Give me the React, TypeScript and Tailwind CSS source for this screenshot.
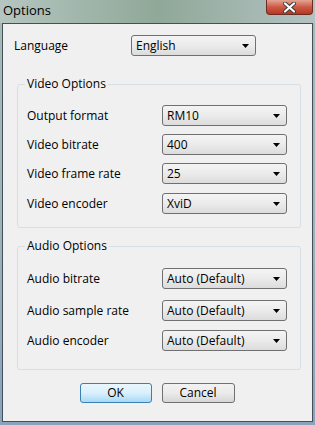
import React from 'react';

const font = { fontFamily: '"Open Sans", "Noto Sans", sans-serif' };

const Select: React.FC<{ value: string; className?: string }> = ({ value, className = '' }) => (
    <div className={`h-[21px] w-[125px] rounded-[3px] border border-[#707070] bg-gradient-to-b from-[#f4f4f4] via-[#ebebeb] to-[#dcdcdc] flex items-center justify-between pl-[4px] pr-[6px] ${className}`}>
        <span className="text-[12px] leading-none text-black">{value}</span>
        <svg width="7" height="4" viewBox="0 0 7 4"><path d="M0 0h7L3.5 4z" fill="#000" /></svg>
    </div>
);

const Row: React.FC<{ label: string; value: string; gap: string }> = ({ label, value, gap }) => (
    <div className={`flex items-center justify-between ${gap}`}>
        <span className="text-[12px] text-black">{label}</span>
        <Select value={value} />
    </div>
);

export default function App() {
    return (
        <div style={font} className="w-[315px] h-[425px] flex flex-col bg-gradient-to-b from-[#a7bab3] via-[#9fb4b6] to-[#8aa3bb]">
            <div className="h-[23px] flex items-start justify-between bg-gradient-to-r from-[#b5c6c0] via-[#8fa898] to-[#b3c2c2]">
                <span className="pl-[3px] pt-[2px] text-[13px] leading-[17px] text-black">Options</span>
                <div className="mr-[2px] w-[47px] h-[15px] rounded-b-[4px] border border-t-0 border-[#6e2c22] bg-gradient-to-b from-[#e4a493] via-[#cc5a45] to-[#b8351f] flex items-center justify-center">
                    <svg width="13" height="11" viewBox="0 0 13 11">
                        <path d="M2 1.5l9 8M11 1.5l-9 8" stroke="#3a3a3a" strokeWidth="4" strokeLinecap="round" />
                        <path d="M2 1.5l9 8M11 1.5l-9 8" stroke="#ffffff" strokeWidth="2.2" strokeLinecap="round" />
                    </svg>
                </div>
            </div>
            <div className="flex-1 mx-[2px] mb-[3px] border border-[#43505c] bg-[#f0f0f0] px-[11px] pt-[11px]">
                <div className="flex items-center">
                    <span className="w-[117px] text-[12px] text-black">Language</span>
                    <Select value="English" className="w-[125px]" />
                </div>

                <fieldset className="mt-[20px] ml-[3px] w-[284px] h-[152px] rounded-[3px] border border-[#d5dfe5] pl-[9px] pr-[13px]">
                    <legend className="-ml-[2px] px-[2px] text-[12px] text-black leading-[16px]">Video Options</legend>
                    <div className="pt-[13px] flex flex-col">
                        <Row label="Output format" value="RM10" gap="" />
                        <Row label="Video bitrate" value="400" gap="mt-[8px]" />
                        <Row label="Video frame rate" value="25" gap="mt-[8px]" />
                        <Row label="Video encoder" value="XviD" gap="mt-[9px]" />
                    </div>
                </fieldset>

                <fieldset className="mt-[10px] ml-[3px] w-[284px] h-[132px] rounded-[3px] border border-[#d5dfe5] pl-[9px] pr-[13px]">
                    <legend className="-ml-[2px] px-[2px] text-[12px] text-black leading-[16px]">Audio Options</legend>
                    <div className="pt-[14px] flex flex-col">
                        <Row label="Audio bitrate" value="Auto (Default)" gap="" />
                        <Row label="Audio sample rate" value="Auto (Default)" gap="mt-[11px]" />
                        <Row label="Audio encoder" value="Auto (Default)" gap="mt-[9px]" />
                    </div>
                </fieldset>

                <div className="mt-[13px] flex justify-center gap-[10px] pr-[1px]">
                    <button className="w-[72px] h-[20px] rounded-[3px] border border-[#3c7fb1] bg-gradient-to-b from-[#eaf6fd] via-[#d9f0fc] to-[#a7d9f5] text-[12px] leading-none text-black">OK</button>
                    <button className="w-[73px] h-[20px] rounded-[3px] border border-[#707070] bg-gradient-to-b from-[#f2f2f2] via-[#ebebeb] to-[#d6d6d6] text-[12px] leading-none text-black">Cancel</button>
                </div>
            </div>
        </div>
    );
}
